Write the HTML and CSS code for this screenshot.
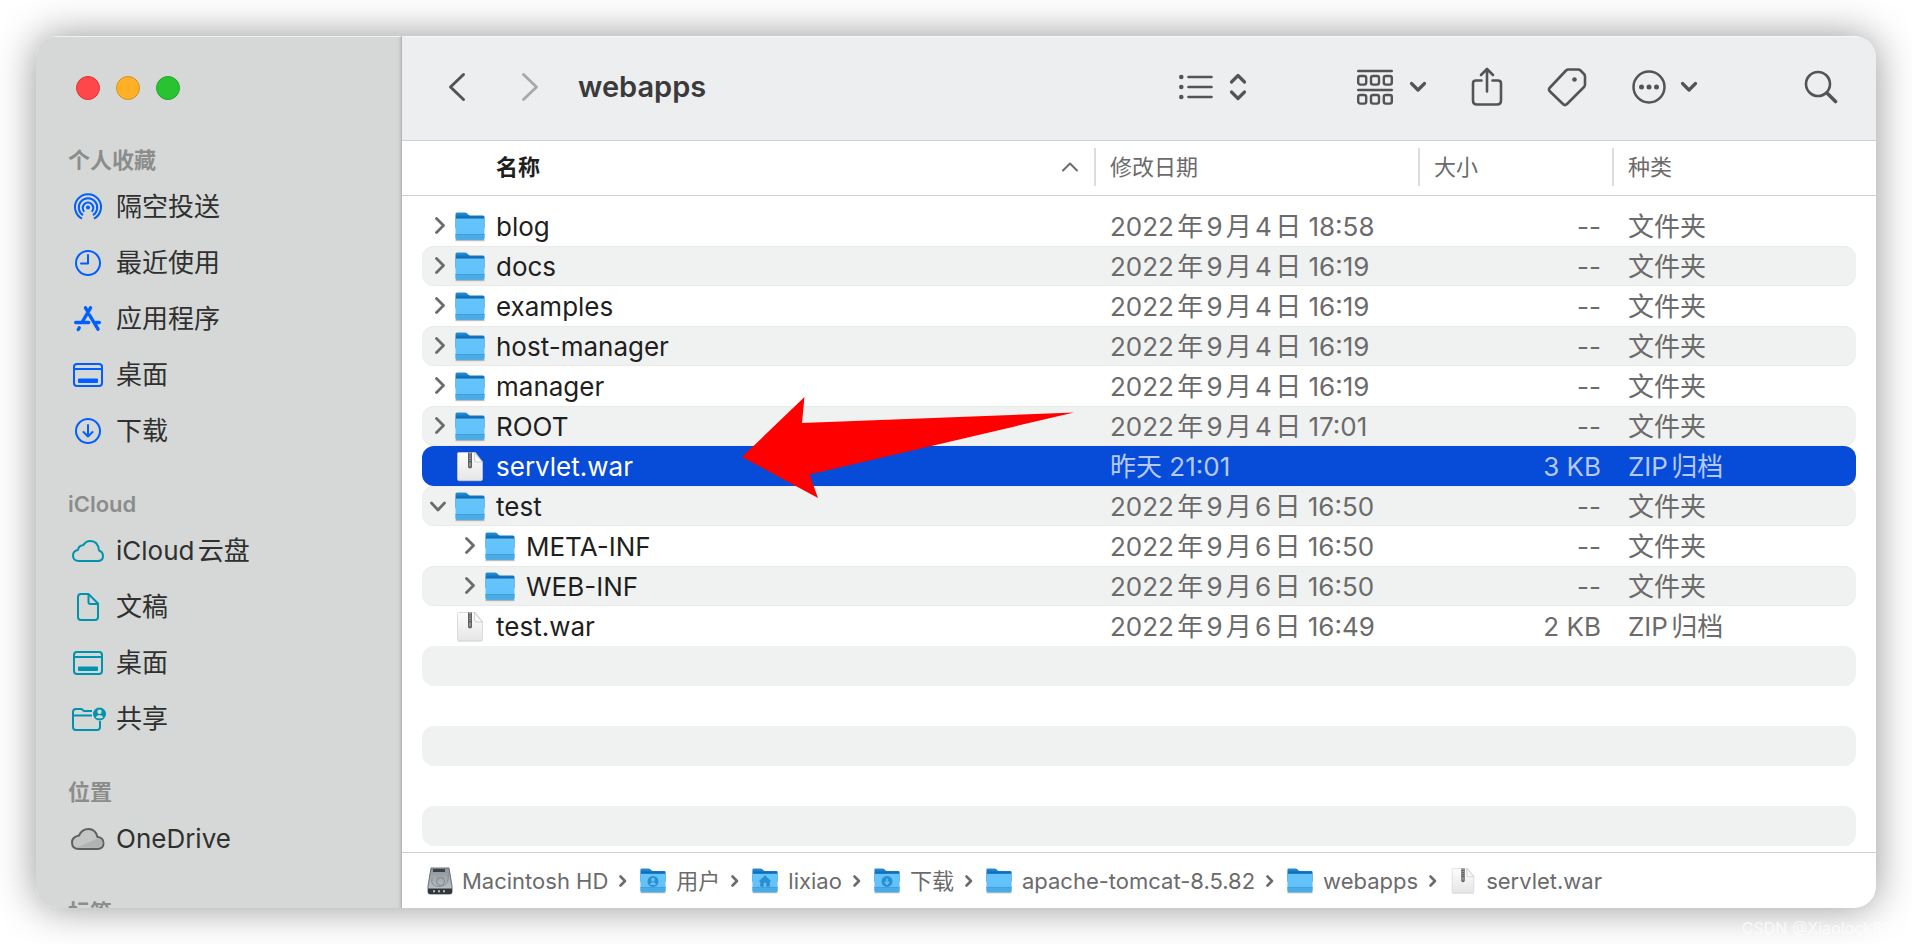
FILE: index.html
```html
<!DOCTYPE html>
<html lang="zh-CN">
<head>
<meta charset="utf-8">
<title>webapps</title>
<link rel="stylesheet" href="styles.css">
</head>
<body>
<svg class="defs" aria-hidden="true">
  <defs>
    <linearGradient id="g-back" x1="0" y1="0" x2="0" y2="1"><stop offset="0" stop-color="#2b93d6"/><stop offset=".4" stop-color="#0763b4"/></linearGradient>
    <linearGradient id="g-front" x1="0" y1="0" x2="0" y2="1"><stop offset="0" stop-color="#66c4fa"/><stop offset="1" stop-color="#5fc1fa"/></linearGradient>
    <linearGradient id="g-page" x1="0" y1="0" x2="0" y2="1"><stop offset="0" stop-color="#fdfdfd"/><stop offset="1" stop-color="#e6e6e6"/></linearGradient>
    <linearGradient id="g-disk" x1="0" y1="0" x2="0" y2="1"><stop offset="0" stop-color="#8d9499"/><stop offset="1" stop-color="#c3ccd1"/></linearGradient>
  </defs>
  <symbol id="folder" viewBox="0 0 32 30">
    <path d="M1.500 27.500h29v1.700h-29z" fill="#000" opacity=".25"/>
    <path d="M1.500 2q0-1.500 1.500-1.500h8q1.200 0 2 .8l1.500 1.500q.7.700 1.700.700H29q1.500 0 1.500 1.500V16h-29z" fill="url(#g-back)"/>
    <path d="M1.500 7.500q0-1 1-1h27q1 0 1 1V26q0 2-2 2h-25q-2 0-2-2z" fill="url(#g-front)"/>
    <path d="M1.500 22.500h29V26q0 2-2 2h-25q-2 0-2-2z" fill="#4aabe5"/>
    <path d="M1.500 22.500h29" stroke="#3a97d2" stroke-width=".8"/>
  </symbol>
  <symbol id="archive" viewBox="0 0 32 30">
    <path d="M3.500 28.500h25v1h-25z" fill="#000" opacity=".15"/>
    <path d="M4.500.5h17l7 9.500V27q0 1.800-1.800 1.800H5.300q-1.800 0-1.800-1.800V1.500q0-1 1-1z" fill="url(#g-page)" stroke="#cfcfcf" stroke-width=".7"/>
    <path d="M20.500.7V8q0 2 2 2h6z" fill="#f9f9f9" stroke="#bdbdbd" stroke-width=".7"/>
    <path d="M14 .5h4v14q0 2-2 2t-2-2z" fill="#5c6063"/>
    <path d="M16 1v8" stroke="#b5b8ba" stroke-width="1.500" stroke-dasharray="1.200 1.200"/>
    <path d="M15.300 10.500h1.400v4h-1.400z" fill="#a9acae"/>
  </symbol>
  <symbol id="chev-right" viewBox="0 0 20 20"><path d="M6.500 1.500l7 7-7 7" fill="none" stroke="currentColor" stroke-width="2.800" stroke-linecap="round" stroke-linejoin="round"/></symbol>
  <symbol id="chev-down" viewBox="0 0 20 20"><path d="M1.500 6l6.500 7 6.500-7" fill="none" stroke="currentColor" stroke-width="2.800" stroke-linecap="round" stroke-linejoin="round"/></symbol>
  <symbol id="sep" viewBox="0 0 10 16"><path d="M2.500 3.500l4.500 4.500-4.500 4.500" fill="none" stroke="currentColor" stroke-width="2.600" stroke-linecap="round" stroke-linejoin="round"/></symbol>
  <symbol id="menu-chev" viewBox="0 0 18 12"><path d="M2.500 2.500L9 9l6.500-6.500" fill="none" stroke="currentColor" stroke-width="3.200" stroke-linecap="round" stroke-linejoin="round"/></symbol>
  <symbol id="desktop" viewBox="0 0 36 36"><g fill="none" stroke="currentColor" stroke-width="2"><rect x="4" y="7" width="28" height="22" rx="3"/><path d="M4 12h28"/></g><rect x="8" y="21.500" width="20" height="4.500" rx="1" fill="currentColor"/></symbol>
</svg>

<div class="window">
  <nav class="sidebar" aria-label="边栏">
    <div class="lights">
      <button class="light close" aria-label="关闭"></button>
      <button class="light minimize" aria-label="最小化"></button>
      <button class="light zoom" aria-label="缩放"></button>
    </div>
    <section class="group">
      <h2>个人收藏</h2>
      <a class="place blue" href="#"><svg viewBox="0 0 36 36"><g fill="none" stroke="currentColor" stroke-width="2"><path d="M12 29.700a13 13 0 1 1 12 0"/><path d="M13 26.200a9.200 9.200 0 1 1 10 0" /><path d="M14.300 22.700a5.300 5.300 0 1 1 7.400 0"/></g><circle cx="18" cy="18.500" r="2" fill="currentColor"/></svg>隔空投送</a>
      <a class="place blue" href="#"><svg viewBox="0 0 36 36"><g fill="none" stroke="currentColor" stroke-width="2" stroke-linecap="round" stroke-linejoin="round"><circle cx="18" cy="18" r="12"/><path d="M18 10v8.500h-7"/></g></svg>最近使用</a>
      <a class="place blue" href="#"><svg viewBox="0 0 36 36"><g fill="none" stroke="currentColor" stroke-width="3.400" stroke-linecap="round"><path d="M15.500 6.800l2.500 4.200M20.500 6.800L12.500 20.500M19.500 14l8.500 14.200M5.700 21.500h13M26 21.500h3.300M9.200 26.800l-1 1.700"/></g></svg>应用程序</a>
      <a class="place blue" href="#"><svg><use href="#desktop"/></svg>桌面</a>
      <a class="place blue" href="#"><svg viewBox="0 0 36 36"><g fill="none" stroke="currentColor" stroke-width="2" stroke-linecap="round" stroke-linejoin="round"><circle cx="18" cy="18" r="12"/><path d="M18 12v11M13.500 19l4.500 4.500 4.500-4.500"/></g></svg>下载</a>
    </section>
    <section class="group">
      <h2>iCloud</h2>
      <a class="place teal" href="#"><svg viewBox="0 0 36 36"><path d="M9 28q-6 0-6-5.500 0-4.500 5-5.500 .5-4.300 5.500-5 2.200-4 7-4 7.500 0 8.500 9.500 4 1.300 4 5.500 0 5-5.500 5z" fill="none" stroke="currentColor" stroke-width="2" stroke-linejoin="round"/></svg>iCloud云盘</a>
      <a class="place teal" href="#"><svg viewBox="0 0 36 36"><g fill="none" stroke="currentColor" stroke-width="2" stroke-linejoin="round"><path d="M11 5h7.500L28 14.500V28q0 3-3 3H11q-3 0-3-3V8q0-3 3-3z"/><path d="M18.500 5.500v7.500q0 2 2 2H28"/></g></svg>文稿</a>
      <a class="place teal" href="#"><svg><use href="#desktop"/></svg>桌面</a>
      <a class="place teal" href="#"><svg viewBox="0 0 36 36"><g fill="none" stroke="currentColor" stroke-width="2" stroke-linejoin="round"><path d="M22 10h-8l-2.500-2H6Q3 8 3 11v15q0 3 3 3h21q3 0 3-3v-6M3 14.500h19"/></g><circle cx="29.500" cy="13" r="6.500" fill="currentColor"/><circle cx="29.500" cy="10.800" r="2.200" fill="#d6d8d7"/><path d="M25.700 16.500q.8-2.500 3.800-2.500t3.800 2.500q-3.800 2-7.600 0z" fill="#d6d8d7"/></svg>共享</a>
    </section>
    <section class="group">
      <h2>位置</h2>
      <a class="place gray" href="#"><svg viewBox="0 0 36 36"><path d="M9 28q-7 0-7-6.500 0-5.500 7-7Q12 8 18.500 8q7 0 9 8 6 .8 6 6.200T27.500 28z" fill="#c4c5c5" stroke="currentColor" stroke-width="2"/><path d="M7 26.500l22-9.500q3.500 1.500 3.500 5t-5 4.800z" fill="#b1b2b2"/></svg>OneDrive</a>
    </section>
    <section class="group">
      <h2>标签</h2>
    </section>
  </nav>

  <main class="content">
    <header class="toolbar">
      <div class="nav">
        <button class="tool" aria-label="后退"><svg width="18" height="30" viewBox="0 0 18 30"><path d="M15.500 2.500L2.500 15l13 12.500" fill="none" stroke="currentColor" stroke-width="3" stroke-linecap="round" stroke-linejoin="round"/></svg></button>
        <button class="tool dim" aria-label="前进"><svg width="18" height="30" viewBox="0 0 18 30"><path d="M2.500 2.500l13 12.500-13 12.500" fill="none" stroke="currentColor" stroke-width="2.800" stroke-linecap="round" stroke-linejoin="round"/></svg></button>
      </div>
      <h1>webapps</h1>
      <button class="tool view" aria-label="显示方式"><svg width="34" height="26" viewBox="0 0 34 26"><g fill="currentColor"><circle cx="2.300" cy="3" r="2.300"/><circle cx="2.300" cy="13" r="2.300"/><circle cx="2.300" cy="23" r="2.300"/></g><path d="M9.500 3h23M9.500 13h23M9.500 23h23" stroke="currentColor" stroke-width="2.600" stroke-linecap="round"/></svg><svg width="18" height="28" viewBox="0 0 18 28"><path d="M2.500 9L9 2.500 15.500 9M2.500 19L9 25.500l6.500-6.500" fill="none" stroke="currentColor" stroke-width="3.200" stroke-linecap="round" stroke-linejoin="round"/></svg></button>
      <div class="actions">
        <button class="tool" aria-label="分组"><svg width="36" height="36" viewBox="0 0 36 36"><g fill="none" stroke="currentColor" stroke-width="2.400"><path d="M1.200 2h33.600M1.200 21h33.600" stroke-linecap="round"/><rect x="1.200" y="7" width="8" height="8.600" rx="2"/><rect x="14" y="7" width="8" height="8.600" rx="2"/><rect x="26.800" y="7" width="8" height="8.600" rx="2"/><rect x="1.200" y="26" width="8" height="8.600" rx="2"/><rect x="14" y="26" width="8" height="8.600" rx="2"/><rect x="26.800" y="26" width="8" height="8.600" rx="2"/></g></svg><svg width="18" height="12"><use href="#menu-chev"/></svg></button>
        <button class="tool" aria-label="共享"><svg width="32" height="42" viewBox="0 0 32 42"><g fill="none" stroke="currentColor" stroke-width="2.600" stroke-linecap="round" stroke-linejoin="round"><path d="M10.500 14.500H5q-3 0-3 3v17q0 4 4 4h20q4 0 4-4v-17q0-3-3-3h-5.500M16 25.500V3.500M10 9l6-6 6 6"/></g></svg></button>
        <button class="tool" aria-label="标签"><svg width="40" height="40" viewBox="0 0 40 40"><path d="M21.500 2.500H31q1.500 0 2.500 1l3.500 3.500q1 1 1 2.500v8q0 1.500-1 2.500L20 37q-2 2-4 0L3 24.500q-2-2 0-4L19 3.500q1-1 2.500-1z" fill="none" stroke="currentColor" stroke-width="2.600" stroke-linejoin="round"/><circle cx="27.500" cy="12.500" r="2.300" fill="currentColor"/></svg></button>
        <button class="tool more" aria-label="更多"><svg width="36" height="36" viewBox="0 0 36 36"><circle cx="18" cy="18" r="15.500" fill="none" stroke="currentColor" stroke-width="2.500"/><g fill="currentColor"><circle cx="10.500" cy="18" r="2.500"/><circle cx="18" cy="18" r="2.500"/><circle cx="25.500" cy="18" r="2.500"/></g></svg><svg width="18" height="12"><use href="#menu-chev"/></svg></button>
      </div>
      <button class="tool" aria-label="搜索"><svg width="34" height="34" viewBox="0 0 34 34"><circle cx="14" cy="14" r="12" fill="none" stroke="currentColor" stroke-width="2.600"/><path d="M23 23l8.500 8.500" stroke="currentColor" stroke-width="3.600" stroke-linecap="round"/></svg></button>
    </header>

    <div class="list">
      <table>
        <thead>
          <tr>
            <th class="name" scope="col" aria-sort="ascending"><span class="sort">名称<svg width="18" height="12" viewBox="0 0 18 12"><path d="M2 9.500L9 2.500l7 7" fill="none" stroke="currentColor" stroke-width="2" stroke-linecap="round" stroke-linejoin="round"/></svg></span></th>
            <th class="date" scope="col"><span>修改日期</span></th>
            <th class="size" scope="col"><span>大小</span></th>
            <th class="kind" scope="col"><span>种类</span></th>
          </tr>
        </thead>
        <tbody>
          <tr><td><div class="entry"><button aria-label="展开 blog"><svg><use href="#chev-right"/></svg></button><svg class="icon"><use href="#folder"/></svg>blog</div></td><td>2022年9月4日 18:58</td><td>--</td><td>文件夹</td></tr>
          <tr><td><div class="entry"><button aria-label="展开 docs"><svg><use href="#chev-right"/></svg></button><svg class="icon"><use href="#folder"/></svg>docs</div></td><td>2022年9月4日 16:19</td><td>--</td><td>文件夹</td></tr>
          <tr><td><div class="entry"><button aria-label="展开 examples"><svg><use href="#chev-right"/></svg></button><svg class="icon"><use href="#folder"/></svg>examples</div></td><td>2022年9月4日 16:19</td><td>--</td><td>文件夹</td></tr>
          <tr><td><div class="entry"><button aria-label="展开 host-manager"><svg><use href="#chev-right"/></svg></button><svg class="icon"><use href="#folder"/></svg>host-manager</div></td><td>2022年9月4日 16:19</td><td>--</td><td>文件夹</td></tr>
          <tr><td><div class="entry"><button aria-label="展开 manager"><svg><use href="#chev-right"/></svg></button><svg class="icon"><use href="#folder"/></svg>manager</div></td><td>2022年9月4日 16:19</td><td>--</td><td>文件夹</td></tr>
          <tr><td><div class="entry"><button aria-label="展开 ROOT"><svg><use href="#chev-right"/></svg></button><svg class="icon"><use href="#folder"/></svg>ROOT</div></td><td>2022年9月4日 17:01</td><td>--</td><td>文件夹</td></tr>
          <tr class="selected" aria-selected="true"><td><div class="entry file"><svg class="icon"><use href="#archive"/></svg>servlet.war</div></td><td>昨天 21:01</td><td>3 KB</td><td>ZIP归档</td></tr>
          <tr><td><div class="entry"><button aria-label="收起 test"><svg><use href="#chev-down"/></svg></button><svg class="icon"><use href="#folder"/></svg>test</div></td><td>2022年9月6日 16:50</td><td>--</td><td>文件夹</td></tr>
          <tr><td><div class="entry child"><button aria-label="展开 META-INF"><svg><use href="#chev-right"/></svg></button><svg class="icon"><use href="#folder"/></svg>META-INF</div></td><td>2022年9月6日 16:50</td><td>--</td><td>文件夹</td></tr>
          <tr><td><div class="entry child"><button aria-label="展开 WEB-INF"><svg><use href="#chev-right"/></svg></button><svg class="icon"><use href="#folder"/></svg>WEB-INF</div></td><td>2022年9月6日 16:50</td><td>--</td><td>文件夹</td></tr>
          <tr><td><div class="entry file"><svg class="icon"><use href="#archive"/></svg>test.war</div></td><td>2022年9月6日 16:49</td><td>2 KB</td><td>ZIP归档</td></tr>
          <tr class="blank"><td></td><td></td><td></td><td></td></tr>
          <tr class="blank"><td></td><td></td><td></td><td></td></tr>
          <tr class="blank"><td></td><td></td><td></td><td></td></tr>
          <tr class="blank"><td></td><td></td><td></td><td></td></tr>
          <tr class="blank"><td></td><td></td><td></td><td></td></tr>
        </tbody>
      </table>
      <svg class="pointer" viewBox="0 0 332 101" aria-hidden="true"><path d="M0 60L62.500 0 60 26 332 15.500 67.500 77.500 76 101z" fill="#ff0000"/></svg>
    </div>

    <footer>
      <ol class="path">
        <li><svg class="disk" viewBox="0 0 26 28"><path d="M4 1h18l3 18v6q0 2-2 2H3q-2 0-2-2v-6z" fill="url(#g-disk)" stroke="#6b7277"/><path d="M1 21.500h24V25q0 2-2 2H3q-2 0-2-2z" fill="#33373a"/><path d="M6 2h12v3H6z" fill="#3b4044"/><circle cx="13.500" cy="14.500" r="4" fill="none" stroke="#7d868c"/><path d="M21 5q2 14-8 14.500T5 11" fill="none" stroke="#87919a"/><path d="M6 24.300h2M11 24.300h2M16 24.300h2" stroke="#b5babd" stroke-width="2"/></svg>Macintosh HD<svg class="sep"><use href="#sep"/></svg></li>
        <li><svg class="mini" viewBox="0 0 32 30"><use href="#folder"/><circle cx="16" cy="15.500" r="6.300" fill="#2a8fd0"/><circle cx="16" cy="13.500" r="2.300" fill="#62bff6"/><path d="M12.300 19q.7-2.500 3.700-2.500t3.700 2.500q-3.700 1.700-7.400 0z" fill="#62bff6"/></svg>用户<svg class="sep"><use href="#sep"/></svg></li>
        <li><svg class="mini" viewBox="0 0 32 30"><use href="#folder"/><path d="M16 8.500l7.500 7h-2V21.500h-4v-4.500h-3v4.500h-4v-6h-2z" fill="#2a8fd0"/></svg>lixiao<svg class="sep"><use href="#sep"/></svg></li>
        <li><svg class="mini" viewBox="0 0 32 30"><use href="#folder"/><circle cx="16" cy="15.500" r="6.300" fill="#2a8fd0"/><path d="M16 12v6M13.500 16l2.500 2.500 2.500-2.500" fill="none" stroke="#62bff6" stroke-width="1.800"/></svg>下载<svg class="sep"><use href="#sep"/></svg></li>
        <li><svg class="mini"><use href="#folder"/></svg>apache-tomcat-8.5.82<svg class="sep"><use href="#sep"/></svg></li>
        <li><svg class="mini"><use href="#folder"/></svg>webapps<svg class="sep"><use href="#sep"/></svg></li>
        <li><svg class="mini"><use href="#archive"/></svg>servlet.war</li>
      </ol>
    </footer>
  </main>
</div>
<p class="credit">CSDN @Xiaolock830</p>
</body>
</html>
```
FILE: styles.css
```css
* { box-sizing: border-box; }

body {
  margin: 0;
  height: 100vh;
  padding: 36px;
  overflow: hidden;
  background: #fff;
  color: #1f1f1f;
  font: 26px/40px Inter, "Noto Sans CJK SC", sans-serif;
  text-autospace: normal;
}

.defs { position: absolute; width: 0; height: 0; }

button {
  margin: 0;
  padding: 0;
  border: 0;
  background: none;
  color: inherit;
  font: inherit;
}

svg { display: block; flex: none; }

.window {
  display: flex;
  height: 100%;
  overflow: hidden;
  border-radius: 22px;
  background: #fff;
  box-shadow: 0 0 40px rgba(0, 0, 0, .42);
}

/* Sidebar */
.sidebar {
  flex: none;
  width: 366px;
  overflow: hidden;
  background: #d6d8d7;
  border-right: 1px solid #b4b5b5;
  box-shadow: inset 0 1px #f0f1f1, inset -3px 0 3px -2px #bbb;
}

.lights {
  display: flex;
  gap: 16px;
  height: 105px;
  padding: 40px 40px 0;
}

.light {
  width: 24px;
  height: 24px;
  border: 1px solid;
  border-radius: 50%;
}

.close { background: #ff4648; border-color: #dc3438; }
.minimize { background: #ffb026; border-color: #d4911f; }
.zoom { background: #29c230; border-color: #1ea525; }

.group { margin-bottom: 26px; }

.group h2 {
  margin: 0;
  padding-left: 32px;
  color: #8b8d8c;
  font-size: 22px;
  line-height: 38px;
  font-weight: 600;
}

.place {
  display: flex;
  align-items: center;
  gap: 10px;
  height: 56px;
  padding-left: 34px;
  color: #2f302f;
  text-decoration: none;
}

.place svg { width: 36px; height: 36px; overflow: visible; }
.blue svg { color: #005ffe; }
.teal svg { color: #0093ad; }
.gray svg { color: #5e5f5f; }

/* Toolbar */
.content {
  display: flex;
  flex: 1;
  flex-direction: column;
  min-width: 0;
}

.toolbar {
  display: flex;
  flex: none;
  align-items: center;
  height: 105px;
  padding: 0 38px 2px 46px;
  background: #edeef0;
  border-bottom: 1px solid #cfcfd0;
  box-shadow: inset 0 1px #f8f8f9;
  color: #535456;
}

.nav { display: flex; gap: 55px; }
.tool { display: flex; align-items: center; gap: 16px; }
.more { gap: 13px; }
.dim { color: #a7a8a9; }

.toolbar h1 {
  flex: 1;
  margin: 0 0 0 39px;
  color: #3a3a3b;
  font-size: 29px;
  font-weight: 600;
}

.view { margin-right: 110px; }
.actions { display: flex; align-items: center; gap: 44px; margin-right: 106px; }

/* File list */
.list {
  position: relative;
  flex: 1;
  min-height: 0;
  padding: 0 20px;
  overflow: hidden;
}

table {
  width: 100%;
  border-spacing: 0;
  table-layout: fixed;
}

thead { position: relative; }

thead::after {
  content: "";
  position: absolute;
  right: -20px;
  bottom: 0;
  left: -20px;
  height: 1px;
  background: #cfcfd0;
}

th {
  height: 55px;
  padding: 0 0 4px;
  color: #6b6b6b;
  font-size: 22px;
  line-height: 38px;
  font-weight: 400;
  text-align: left;
}

th span { display: block; padding-left: 14px; border-left: 2px solid #dcdcdc; }
.date { width: 324px; }
.size { width: 194px; }
.kind { width: 244px; }
.name { color: #1f1f1f; font-weight: 600; }

th .sort {
  display: flex;
  align-items: center;
  justify-content: space-between;
  padding: 0 15px 0 74px;
  border: 0;
}

.sort svg { color: #6b6b6b; }

tbody::before { content: ""; display: block; height: 10px; }

td {
  height: 40px;
  padding: 2px 0 0 16px;
  color: #6b6b6b;
  line-height: 38px;
  white-space: nowrap;
}

td:nth-child(3) { padding: 2px 11px 0 0; text-align: right; }
td:first-child { padding: 2px 0 0; border-radius: 12px 0 0 12px; color: #1f1f1f; }
td:last-child { border-radius: 0 12px 12px 0; }
tr:nth-child(even) td { background: #f0f2f1; box-shadow: inset 0 1px #e9ebea, inset 0 -1px #e9ebea; }
tr.blank:nth-child(even) td { box-shadow: none; }
tr.selected td { background: #074bd9; color: #b5c9f4; }
tr.selected td:first-child { color: #fff; }

.entry {
  display: flex;
  align-items: center;
  height: 38px;
  padding-left: 8px;
}

.entry.child { padding-left: 38px; }
.entry.file { padding-left: 32px; }
.entry button { width: 20px; height: 20px; margin-right: 4px; color: #6b6b6b; }
.entry button svg { width: 20px; height: 20px; }
.entry .icon { width: 32px; height: 30px; margin-right: 10px; }

.pointer {
  position: absolute;
  top: 256px;
  left: 340px;
  width: 332px;
}

/* Path bar */
footer {
  flex: none;
  padding: 8px 25px 7px;
  border-top: 1px solid #cfcfd0;
}

.path {
  display: flex;
  margin: 0;
  padding: 0;
  list-style: none;
  color: #6b6b6b;
  font-size: 22px;
}

.path li { display: flex; align-items: center; }
.disk { width: 26px; height: 28px; margin-right: 9px; }
.mini { width: 28px; height: 26px; margin-right: 9px; }
.sep { width: 10px; height: 16px; margin: 0 11px 0 10px; }

.credit {
  position: absolute;
  right: 10px;
  bottom: 4px;
  margin: 0;
  color: rgba(255, 255, 255, .7);
  font-size: 16px;
  line-height: 24px;
}
```
